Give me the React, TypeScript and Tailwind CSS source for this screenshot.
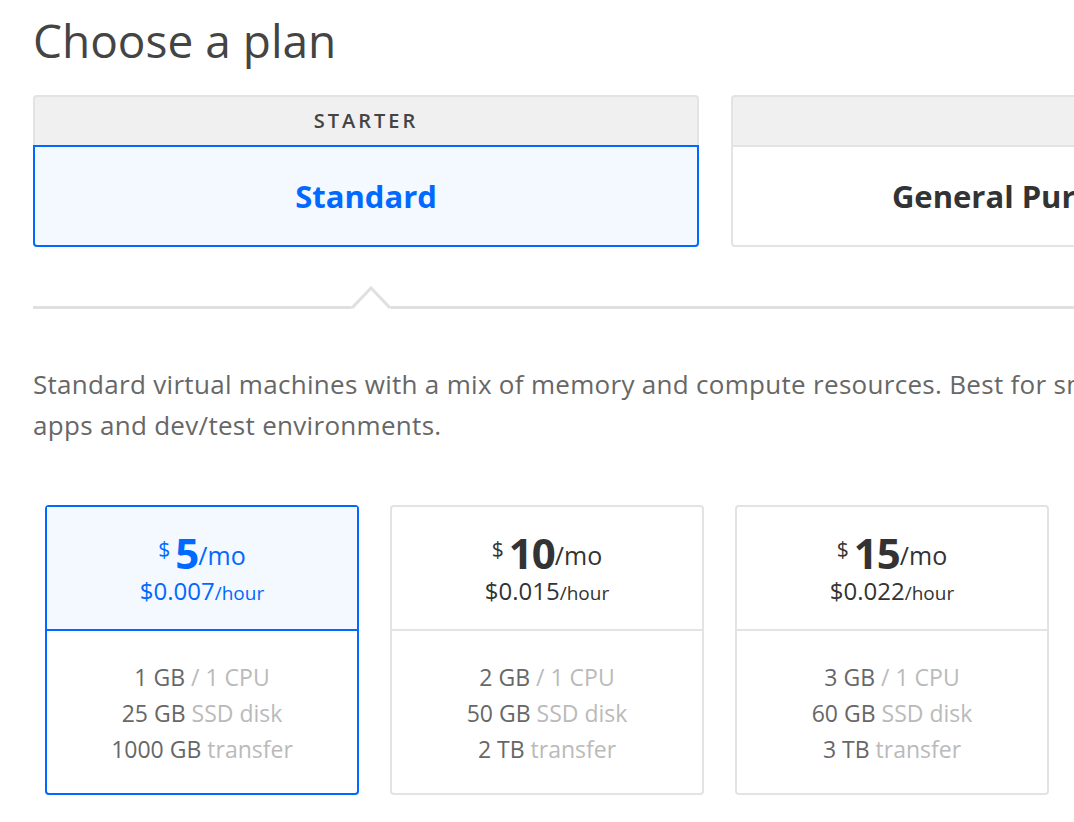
const font = { fontFamily: '"Open Sans", "Liberation Sans", sans-serif' };

type Plan = {
  mo: string;
  hour: string;
  ram: string;
  cpu: string;
  disk: string;
  transfer: string;
  selected?: boolean;
};

const plans: Plan[] = [
  { mo: "5", hour: "$0.007", ram: "1 GB", cpu: "1 CPU", disk: "25 GB", transfer: "1000 GB", selected: true },
  { mo: "10", hour: "$0.015", ram: "2 GB", cpu: "1 CPU", disk: "50 GB", transfer: "2 TB" },
  { mo: "15", hour: "$0.022", ram: "3 GB", cpu: "1 CPU", disk: "60 GB", transfer: "3 TB" },
];

function PlanCard({ plan }: { plan: Plan }) {
  const sel = plan.selected;
  return (
    <div
      className={
        sel
          ? "flex w-[314px] shrink-0 flex-col rounded-[4px] border-2 border-[#0069ff]"
          : "flex w-[314px] shrink-0 flex-col rounded-[4px] border-2 border-[#e3e3e3]"
      }
    >
      <div
        className={
          sel
            ? "flex h-[124px] flex-col items-center justify-center border-b-2 border-[#0069ff] bg-[#f4f8ff] pt-[5px] text-[#0069ff]"
            : "flex h-[124px] flex-col items-center justify-center border-b-2 border-[#e3e3e3] pt-[5px] text-[#333]"
        }
      >
        <div className="flex items-start leading-none">
          <span className="mt-[6px] mr-[5px] text-[21px]">$</span>
          <span className="text-[42px] font-bold leading-[40px] tracking-[-1px]">{plan.mo}</span>
          <span className="mt-[10px] text-[25px]">/mo</span>
        </div>
        <div className="mt-[3px] leading-[30px]">
          <span className="text-[24px]">{plan.hour}</span>
          <span className="text-[19px]">/hour</span>
        </div>
      </div>
      <div className="flex h-[162px] flex-col items-center justify-center pt-[2px] text-[23px] leading-[36px]">
        <div className="text-[#676767]">
          {plan.ram} <span className="text-[#bababa]">/ {plan.cpu}</span>
        </div>
        <div className="text-[#676767]">
          {plan.disk} <span className="text-[#bababa]">SSD disk</span>
        </div>
        <div className="text-[#676767]">
          {plan.transfer} <span className="text-[#bababa]">transfer</span>
        </div>
      </div>
    </div>
  );
}

export default function App() {
  return (
    <div className="h-[822px] w-[1074px] overflow-hidden bg-white" style={font}>
      <div className="w-[1400px] pl-[33px] pt-[9px]">
        <h1 className="text-[46px] leading-[62px] font-normal text-[#444]">Choose a plan</h1>

        <div className="mt-[24px] flex gap-[32px]">
          <div className="w-[666px] shrink-0">
            <div className="flex h-[50px] items-center justify-center rounded-t-[4px] border-2 border-b-0 border-[#e3e3e3] bg-[#f0f0f0] text-[20px] font-semibold tracking-[3px] text-[#444]">
              STARTER
            </div>
            <div className="flex h-[102px] items-center justify-center rounded-b-[4px] border-2 border-[#0069ff] bg-[#f4f8ff] text-[31px] font-bold text-[#0069ff]">
              Standard
            </div>
          </div>
          <div className="w-[578px] shrink-0">
            <div className="h-[50px] rounded-t-[4px] border-2 border-b-0 border-[#e3e3e3] bg-[#f0f0f0]" />
            <div className="flex h-[102px] items-center justify-center rounded-b-[4px] border-2 border-[#e3e3e3] bg-white text-[31px] font-bold text-[#333]">
              General Purpose
            </div>
          </div>
        </div>

        <div className="relative mt-[59px] h-[3px] bg-[#e0e0e0]">
          <svg className="absolute bottom-0 left-[318px]" width="40" height="23" viewBox="0 0 40 23">
            <polygon points="0,23 20,2 40,23" fill="#fff" />
            <polyline points="1,22 20,2 39,22" fill="none" stroke="#e0e0e0" strokeWidth="3" />
          </svg>
        </div>

        <p className="mt-[55px] whitespace-nowrap text-[26px] leading-[41px] tracking-[0.3px] text-[#676767]">
          Standard virtual machines with a mix of memory and compute resources. Best for small projects that can
          handle variable levels of CPU performance, like blogs, web
          <br />
          apps and dev/test environments.
        </p>

        <div className="mt-[59px] ml-[12px] flex gap-[31px]">
          {plans.map((p) => (
            <PlanCard key={p.mo} plan={p} />
          ))}
        </div>
      </div>
    </div>
  );
}
